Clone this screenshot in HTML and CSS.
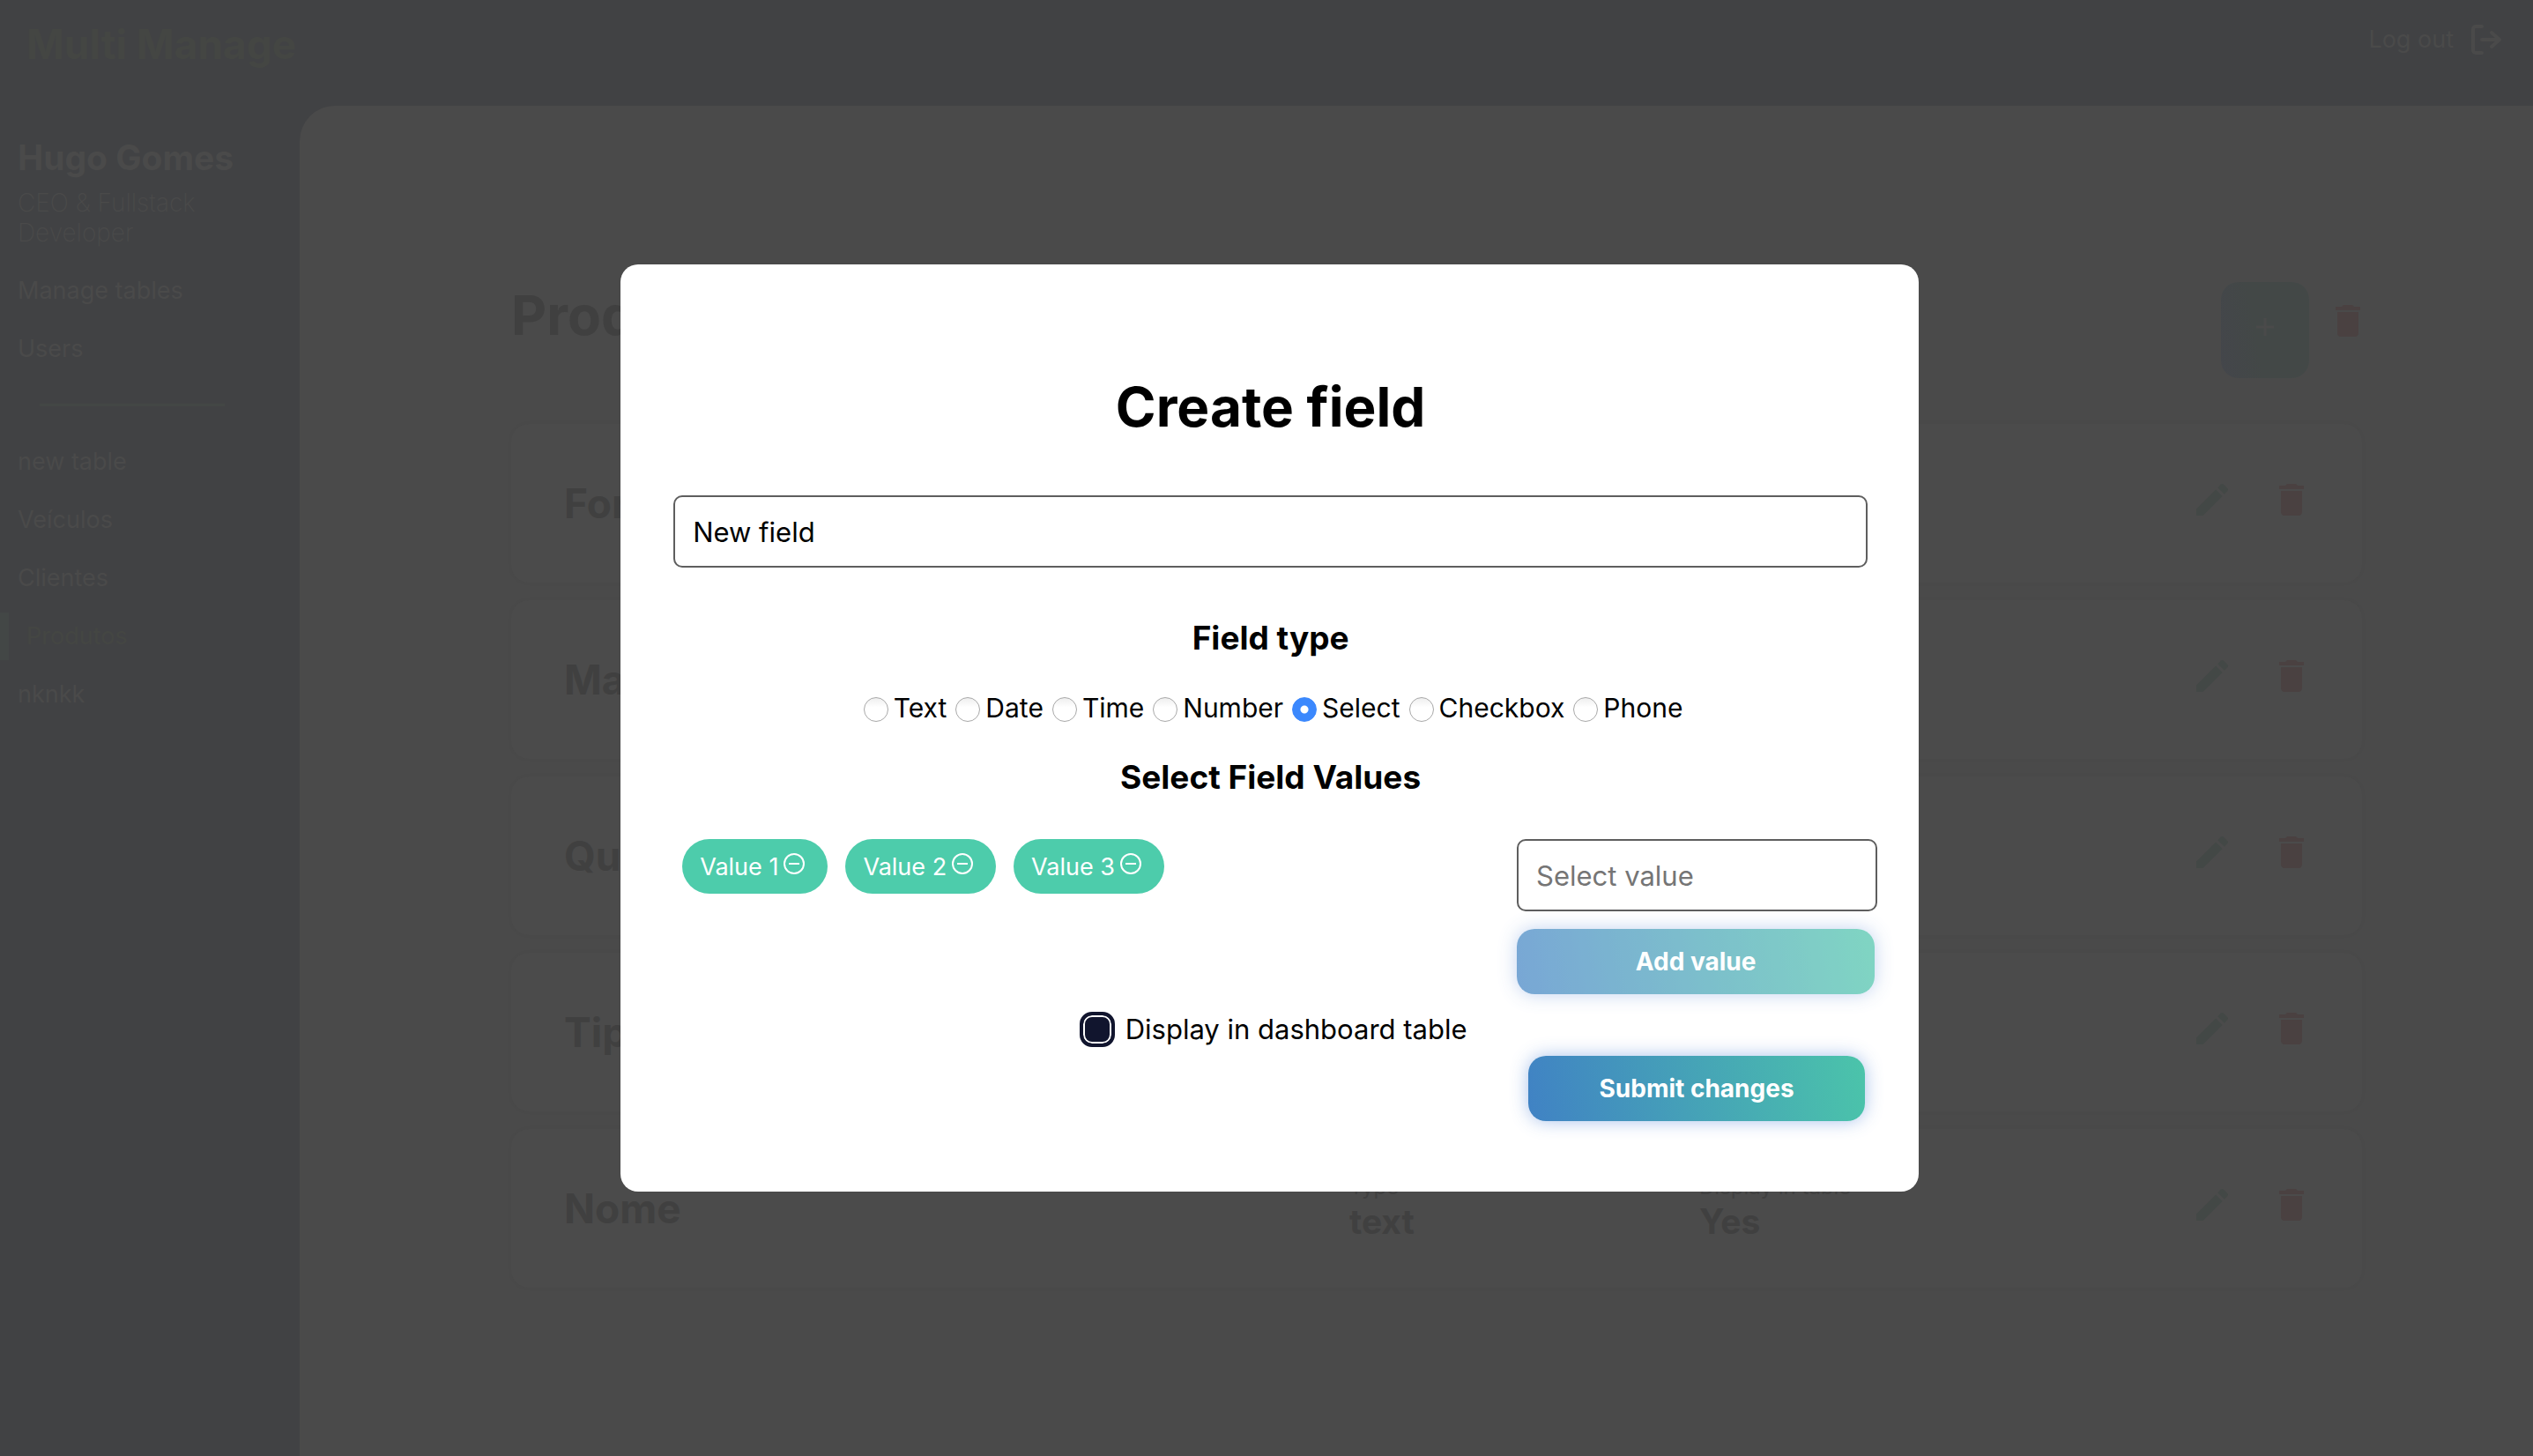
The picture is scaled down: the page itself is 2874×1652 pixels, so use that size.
FILE: index.html
```html
<!DOCTYPE html>
<html lang="en">
<head>
<meta charset="utf-8">
<title>Multi Manage</title>
<meta name="viewport" content="width=device-width, initial-scale=1">
<link rel="stylesheet" href="styles.css">
</head>
<body>
<svg class="sprite" aria-hidden="true">
  <symbol id="trash" viewBox="0 0 24 24"><path d="M6 19c0 1.1.9 2 2 2h8c1.1 0 2-.9 2-2V7H6v12zM19 4h-3.5l-1-1h-5l-1 1H5v2h14V4z"/></symbol>
  <symbol id="pencil" viewBox="0 0 24 24"><path d="M3 17.25V21h3.75L17.81 9.94l-3.75-3.75L3 17.25zM20.71 7.04a1 1 0 0 0 0-1.41l-2.34-2.34a1 1 0 0 0-1.41 0l-1.83 1.83 3.75 3.75 1.83-1.83z"/></symbol>
  <symbol id="minus" viewBox="0 0 24 24"><circle cx="12" cy="12" r="11"/><path d="M6 12h12"/></symbol>
</svg>
<div class="page">
  <header class="topbar">
    <a class="brand" href="#">Multi Manage</a>
    <a class="logout" href="#">Log out
      <svg class="logout-icon" viewBox="0 0 34 34" aria-hidden="true"><path d="M12 2H5a3 3 0 0 0-3 3v24a3 3 0 0 0 3 3h7M12 17h19M23 9l9 8-9 8"/></svg>
    </a>
  </header>
  <div class="body">
    <aside class="sidebar">
      <h2 class="user">Hugo Gomes</h2>
      <p class="role">CEO &amp; Fullstack Developer</p>
      <nav class="nav">
        <a class="nav-link" href="#">Manage tables</a>
        <a class="nav-link" href="#">Users</a>
      </nav>
      <hr class="divider">
      <nav class="nav">
        <a class="nav-link" href="#">new table</a>
        <a class="nav-link" href="#">Veículos</a>
        <a class="nav-link" href="#">Clientes</a>
        <a class="nav-link active" href="#">Produtos</a>
        <a class="nav-link" href="#">nknkk</a>
      </nav>
    </aside>
    <main class="main">
      <div class="main-head">
        <h1 class="heading">Produtos</h1>
        <button class="add" type="button" aria-label="Add field"><svg viewBox="0 0 20 20" aria-hidden="true"><path d="M10 0v20M0 10h20"/></svg></button>
        <button class="icon-btn red" type="button" aria-label="Delete table"><svg><use href="#trash"/></svg></button>
      </div>
      <section class="cards">
        <article class="card"><h2 class="name">Fornecedor</h2><p class="meta">Type<strong>text</strong></p><p class="meta">Display in table<strong>Yes</strong></p><button class="icon-btn green" type="button" aria-label="Edit"><svg><use href="#pencil"/></svg></button><button class="icon-btn red" type="button" aria-label="Delete"><svg><use href="#trash"/></svg></button></article>
        <article class="card"><h2 class="name">Marca</h2><p class="meta">Type<strong>text</strong></p><p class="meta">Display in table<strong>Yes</strong></p><button class="icon-btn green" type="button" aria-label="Edit"><svg><use href="#pencil"/></svg></button><button class="icon-btn red" type="button" aria-label="Delete"><svg><use href="#trash"/></svg></button></article>
        <article class="card"><h2 class="name">Quantidade</h2><p class="meta">Type<strong>number</strong></p><p class="meta">Display in table<strong>Yes</strong></p><button class="icon-btn green" type="button" aria-label="Edit"><svg><use href="#pencil"/></svg></button><button class="icon-btn red" type="button" aria-label="Delete"><svg><use href="#trash"/></svg></button></article>
        <article class="card"><h2 class="name">Tipo</h2><p class="meta">Type<strong>select</strong></p><p class="meta">Display in table<strong>Yes</strong></p><button class="icon-btn green" type="button" aria-label="Edit"><svg><use href="#pencil"/></svg></button><button class="icon-btn red" type="button" aria-label="Delete"><svg><use href="#trash"/></svg></button></article>
        <article class="card"><h2 class="name">Nome</h2><p class="meta">Type<strong>text</strong></p><p class="meta">Display in table<strong>Yes</strong></p><button class="icon-btn green" type="button" aria-label="Edit"><svg><use href="#pencil"/></svg></button><button class="icon-btn red" type="button" aria-label="Delete"><svg><use href="#trash"/></svg></button></article>
      </section>
    </main>
  </div>
</div>

<div class="overlay">
  <form class="modal" role="dialog" aria-labelledby="modal-title">
    <h1 class="modal-title" id="modal-title">Create field</h1>
    <input class="text-input" type="text" value="New field" aria-label="Field name">
    <h3 class="subtitle" id="type-title">Field type</h3>
    <div class="types" role="radiogroup" aria-labelledby="type-title">
      <label class="type"><input type="radio" name="type">Text</label>
      <label class="type"><input type="radio" name="type">Date</label>
      <label class="type"><input type="radio" name="type">Time</label>
      <label class="type"><input type="radio" name="type">Number</label>
      <label class="type"><input type="radio" name="type" checked>Select</label>
      <label class="type"><input type="radio" name="type">Checkbox</label>
      <label class="type"><input type="radio" name="type">Phone</label>
    </div>
    <h3 class="subtitle">Select Field Values</h3>
    <div class="values">
      <div class="chips">
        <span class="chip">Value 1<button type="button" aria-label="Remove Value 1"><svg><use href="#minus"/></svg></button></span>
        <span class="chip">Value 2<button type="button" aria-label="Remove Value 2"><svg><use href="#minus"/></svg></button></span>
        <span class="chip">Value 3<button type="button" aria-label="Remove Value 3"><svg><use href="#minus"/></svg></button></span>
      </div>
      <div class="value-form">
        <input class="text-input" type="text" placeholder="Select value" aria-label="Select value">
        <button class="btn add-value" type="button" disabled>Add value</button>
      </div>
    </div>
    <label class="display"><input type="checkbox">Display in dashboard table</label>
    <button class="btn submit" type="submit">Submit changes</button>
  </form>
</div>
</body>
</html>
```
FILE: styles.css
```css
* { box-sizing: border-box; }
body, h1, h2, h3, p { margin: 0; }
body {
  background: #414244;
  color: #404040;
  font-family: Inter, "Liberation Sans", sans-serif;
  font-size: 27px;
  line-height: 34px;
}
a { color: inherit; text-decoration: none; }
button, input { font: inherit; }
button { border: 0; background: none; padding: 0; }
svg { display: block; }
.sprite { position: absolute; width: 0; height: 0; }

/* Dimmed page behind the dialog */
.page { min-height: 100vh; display: flex; flex-direction: column; }
.topbar {
  height: 120px;
  padding: 20px 36px 0 30px;
  display: flex;
  justify-content: space-between;
  align-items: flex-start;
}
.brand { color: #444643; font-size: 46px; line-height: 60px; font-weight: 700; }
.logout { display: flex; align-items: center; gap: 20px; padding-top: 8px; color: #4a4a4a; }
.logout-icon { width: 34px; height: 34px; fill: none; stroke: #4a4a4a; stroke-width: 4; stroke-linecap: round; stroke-linejoin: round; }

.body { flex: 1; display: flex; }
.sidebar { width: 340px; flex: none; color: #4a4a4a; padding-top: 34px; }
.user { font-size: 39px; line-height: 50px; padding-left: 20px; }
.role { font-size: 28px; font-weight: 200; padding: 9px 60px 0 20px; }
.nav { display: flex; flex-direction: column; gap: 12px; margin-top: 22px; }
.nav-link { display: block; padding: 10px 20px; }
.nav-link.active { color: #444643; border-left: 10px solid #434746; }
.divider { border: 0; height: 3px; width: 210px; margin: 35px 0 36px 45px; background: #434745; }
.divider + .nav { margin-top: 0; }

.main { flex: 1; background: #4a4a4a; border-top-left-radius: 40px; padding: 200px 194px 60px 240px; }
.main-head { display: flex; align-items: flex-start; }
.heading { flex: 1; font-size: 62px; line-height: 76px; }
.add {
  width: 100px;
  height: 109px;
  border-radius: 20px;
  display: grid;
  place-items: center;
  padding-bottom: 8px;
  background: linear-gradient(80deg, #44464b, #434847 40%, #434847);
}
.add svg { width: 20px; height: 20px; stroke: #4a4a4a; stroke-width: 3; }
.icon-btn svg { width: 48px; height: 48px; fill: currentColor; }
.main-head .icon-btn { margin: 20px -8px 0 20px; }
.red { color: #4a4141; }
.green { color: #434846; }
.cards { display: flex; flex-direction: column; gap: 20px; margin-top: 52px; }
.card {
  height: 180px;
  padding: 0 56px 0 60px;
  display: grid;
  grid-template-columns: 891fr 397fr 558fr 90px 48px;
  align-items: center;
  border-radius: 20px;
  background: #4b4b4b;
  box-shadow: 0 0 8px rgba(0, 0, 0, 0.02);
}
.name { font-size: 46px; line-height: 58px; }
.meta { font-size: 24px; line-height: 30px; }
.meta strong { display: block; font-size: 39px; line-height: 48px; }
.card .icon-btn { margin-bottom: 8px; justify-self: start; }

/* Dialog */
.overlay {
  position: fixed;
  inset: 0;
  padding: 0 24.25% 0 24.5%;
  display: flex;
  align-items: center;
}
.modal {
  flex: 1;
  min-width: 0;
  display: flex;
  flex-direction: column;
  padding: 124px 58px 80px 60px;
  border-radius: 20px;
  background: #fff;
  color: #000;
  font-size: 31px;
  line-height: 38px;
}
.modal-title { text-align: center; font-size: 62px; line-height: 76px; margin-bottom: 62px; }
.text-input {
  width: 100%;
  height: 82px;
  padding: 0 20px;
  border: 2px solid #5e5e5e;
  border-radius: 10px;
  background: #fff;
  color: #000;
}
.text-input::placeholder { color: #757575; opacity: 1; }
.subtitle { text-align: center; font-size: 37px; line-height: 44px; }
.text-input + .subtitle { margin-top: 58px; }
.types { display: flex; justify-content: center; gap: 10px; margin: 38px 0; padding-left: 6px; font-size: 30px; }
.type { display: flex; align-items: center; }
.type input {
  appearance: none;
  width: 28px;
  height: 28px;
  margin: 4px 6px 0 0;
  border: 1px solid #a8a8a8;
  border-radius: 50%;
  background: linear-gradient(#eee, #fff 40%);
}
.type input:checked { border-color: #3b88fd; background: radial-gradient(circle, #fff 4px, #3b88fd 5px); }
.values { display: flex; justify-content: space-between; align-items: flex-start; margin: 48px -11px 20px 10px; }
.chips { display: flex; gap: 20px; }
.chip {
  display: flex;
  align-items: center;
  gap: 6px;
  height: 62px;
  padding: 2px 26px 0 20px;
  border-radius: 31px;
  background: #4dccab;
  color: #fff;
  font-size: 27px;
}
.chip svg { width: 24px; height: 24px; margin-bottom: 8px; fill: none; stroke: #fff; stroke-width: 2; }
.value-form { width: 409px; }
.btn {
  display: block;
  height: 74px;
  border-radius: 20px;
  background: linear-gradient(80deg, #4082c4, #4bc4aa);
  box-shadow: 0 0 20px rgba(64, 120, 210, 0.45);
  color: #fff;
  font-size: 28px;
  font-weight: 700;
}
.btn:disabled { opacity: 0.7; }
.add-value { width: 406px; margin-top: 20px; }
.display { align-self: center; display: flex; align-items: center; gap: 12px; padding-left: 6px; }
.display input {
  appearance: none;
  width: 40px;
  height: 40px;
  margin: 0;
  border: 4px solid #11152e;
  border-radius: 14px;
  background: #11152e;
  box-shadow: inset 0 0 0 2px #fff;
}
.submit { align-self: flex-end; width: 382px; margin: 10px 3px 0 0; }
```
